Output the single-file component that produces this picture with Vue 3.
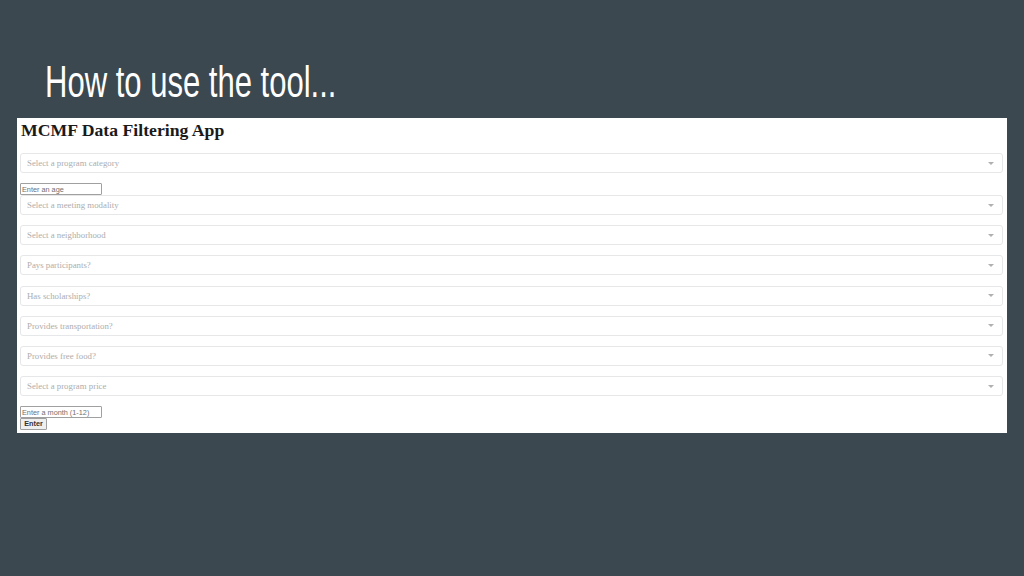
<template>
  <div class="slide">
    <h1 class="slide-title">How to use the tool...</h1>
    <div class="panel">
      <h2 class="app-title">MCMF Data Filtering App</h2>
      <div class="select first">
        <span>{{ category }}</span>
        <i class="caret"></i>
      </div>
      <input class="field age" placeholder="Enter an age" />
      <div class="select-list">
        <div class="select" v-for="label in filters" :key="label">
          <span>{{ label }}</span>
          <i class="caret"></i>
        </div>
      </div>
      <input class="field month" placeholder="Enter a month (1-12)" />
      <button class="enter">Enter</button>
    </div>
  </div>
</template>

<script setup>
const category = 'Select a program category'
const filters = [
  'Select a meeting modality',
  'Select a neighborhood',
  'Pays participants?',
  'Has scholarships?',
  'Provides transportation?',
  'Provides free food?',
  'Select a program price'
]
</script>

<style scoped>
.slide {
  width: 1024px;
  height: 576px;
  background: #3b4850;
  overflow: hidden;
  box-sizing: border-box;
  padding: 57px 17px 0;
}
.slide-title {
  margin: 0 0 0 28px;
  height: 61px;
  font-family: "Liberation Sans", sans-serif;
  font-size: 44px;
  line-height: 50px;
  font-weight: 400;
  color: #fff;
  white-space: nowrap;
  transform: scaleX(0.705);
  transform-origin: left center;
}
.panel {
  width: 990px;
  height: 315px;
  background: #fff;
  box-sizing: border-box;
  padding: 2px 4px 0 3px;
  display: flex;
  flex-direction: column;
  align-items: flex-start;
}
.app-title {
  margin: 0 0 13px 1px;
  height: 20px;
  font-family: "Liberation Serif", serif;
  font-size: 17.7px;
  line-height: 20px;
  font-weight: 700;
  color: #1a1a1a;
}
.select {
  width: 983px;
  height: 20px;
  box-sizing: border-box;
  border: 1px solid #e6e7e8;
  border-radius: 3px;
  padding: 0 8px 0 6px;
  display: flex;
  align-items: center;
  justify-content: space-between;
  font-family: "Liberation Serif", serif;
  font-size: 8.8px;
  color: #adadad;
}
.select.first {
  margin-bottom: 10px;
}
.select-list {
  display: flex;
  flex-direction: column;
  gap: 10.2px;
  margin-bottom: 10px;
}
.caret {
  width: 0;
  height: 0;
  border-left: 3px solid transparent;
  border-right: 3px solid transparent;
  border-top: 3px solid #b0b0b0;
}
.field {
  width: 82px;
  height: 12px;
  box-sizing: border-box;
  border: 1px solid #a0a0a0;
  border-radius: 1px;
  padding: 0 1px;
  font-family: "Liberation Sans", sans-serif;
  font-size: 7.3px;
  outline: none;
  background: #fff;
}
.field::placeholder {
  color: #707070;
  opacity: 1;
}
.enter {
  width: 27px;
  height: 12px;
  padding: 0;
  box-sizing: border-box;
  border: 1px solid #a0a0a0;
  border-radius: 1px;
  background: #efefef;
  font-family: "Liberation Sans", sans-serif;
  font-size: 7.3px;
  font-weight: 700;
  line-height: 10px;
  color: #333;
}
</style>
